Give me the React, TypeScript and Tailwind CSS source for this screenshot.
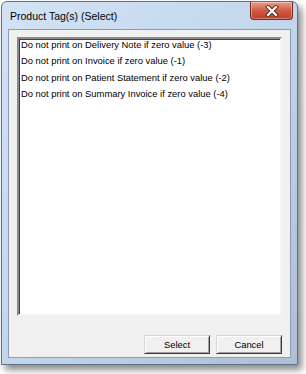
import React from "react";

const TAGS = [
  "Do not print on Delivery Note if zero value (-3)",
  "Do not print on Invoice if zero value (-1)",
  "Do not print on Patient Statement if zero value (-2)",
  "Do not print on Summary Invoice if zero value (-4)",
];

function CloseButton() {
  return (
    <div className="absolute right-[4px] top-0 w-[43px] h-[18px] rounded-b-[4px] border border-t-0 border-[#6d2a1e] bg-gradient-to-b from-[#e9a08e] via-[#cf5a42] to-[#c23d22] shadow-[inset_0_0_0_1px_rgba(255,255,255,0.35)] flex items-center justify-center">
      <svg width="14" height="12" viewBox="0 0 14 12">
        <path d="M3 2 L11 10 M11 2 L3 10" stroke="#5a2a22" strokeWidth="4" strokeLinecap="square" />
        <path d="M3 2 L11 10 M11 2 L3 10" stroke="#ffffff" strokeWidth="2.2" strokeLinecap="square" />
      </svg>
    </div>
  );
}

function Button({ label }: { label: string }) {
  return (
    <button className="w-[66px] h-[19px] bg-[#f0f0f0] border border-t-[#d6d6d6] border-l-[#d6d6d6] border-b-[#3c3c3c] border-r-[#3c3c3c] shadow-[inset_1px_1px_0_#ffffff,inset_-1px_-1px_0_#a0a0a0] text-[9.4px] text-black leading-none">
      {label}
    </button>
  );
}

export default function App() {
  return (
    <div className="w-[306px] h-[374px] bg-white pt-[1px] pl-[1px] font-['Liberation_Sans',Arial,sans-serif]">
      <div className="relative w-[297px] h-[364px] rounded-t-[6px] border border-[#5f7089] bg-gradient-to-br from-[#d3e3f5] via-[#c2d6ed] to-[#aebfd3] shadow-[4px_5px_7px_rgba(0,0,0,0.45)] flex flex-col px-[6px] pb-[6px]">
        <div className="h-[27px] flex items-center pl-[2px] pt-[2px] text-[10.5px] text-black">
          Product Tag(s) (Select)
        </div>
        <CloseButton />
        <div className="flex-1 border border-[#8b9cb3] bg-[#f0f0f0] flex flex-col px-[8px] pt-[7px]">
          <div className="h-[279px] bg-white border-2 border-t-[#8a8a8a] border-l-[#8a8a8a] border-b-[#f4f4f4] border-r-[#f4f4f4] shadow-[inset_1px_1px_0_#404040] pl-[2px] flex flex-col gap-[6.3px] pt-[1px]">
            {TAGS.map((t) => (
              <div key={t} className="h-[10px] leading-[10px] text-[9.4px] text-black whitespace-nowrap">
                {t}
              </div>
            ))}
          </div>
          <div className="flex justify-end gap-[6px] mt-[19px]">
            <Button label="Select" />
            <Button label="Cancel" />
          </div>
        </div>
      </div>
    </div>
  );
}
